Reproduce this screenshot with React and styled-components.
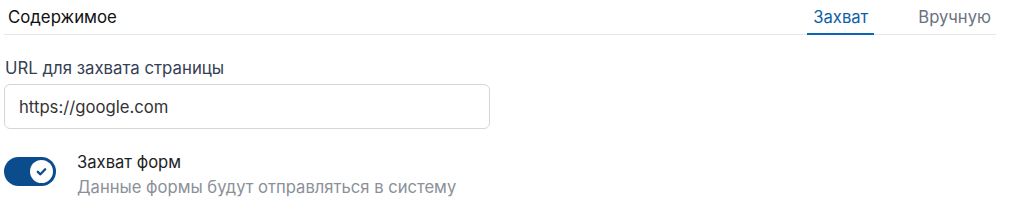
import React from 'react';
import styled, { createGlobalStyle } from 'styled-components';

const GlobalStyle = createGlobalStyle`
	body {
		margin: 0;
		background: #ffffff;
		font-family: Inter, 'Noto Sans', sans-serif;
	}
`;

const CheckIcon = () => (
	<svg width="13" height="13" viewBox="0 0 12 12" fill="none">
		<path d="M2.6 6.3 L5 8.6 L9.4 3.9" stroke="#0b4d8c" strokeWidth="2.1" strokeLinecap="round" strokeLinejoin="round" />
	</svg>
);

const App = () => (
	<>
		<GlobalStyle />
		<Panel>
			<Header>
				<HeaderTitle>Содержимое</HeaderTitle>
				<Tabs>
					<Tab $active>Захват</Tab>
					<Tab>Вручную</Tab>
				</Tabs>
			</Header>
			<Field>
				<FieldLabel>URL для захвата страницы</FieldLabel>
				<TextInput defaultValue="https://google.com" />
			</Field>
			<ToggleRow>
				<Switch>
					<Knob>
						<CheckIcon />
					</Knob>
				</Switch>
				<ToggleText>
					<ToggleTitle>Захват форм</ToggleTitle>
					<ToggleHint>Данные формы будут отправляться в систему</ToggleHint>
				</ToggleText>
			</ToggleRow>
		</Panel>
	</>
);

const Panel = styled.div`
	width: 992px;
	padding-left: 4px;
`;

const Header = styled.div`
	display: flex;
	align-items: stretch;
	justify-content: space-between;
	height: 34px;
	border-bottom: 1px solid #e4e6ea;
`;

const HeaderTitle = styled.div`
	padding-left: 4px;
	display: flex;
	align-items: center;
	font-size: 16.8px;
	color: #111111;
`;

const Tabs = styled.div`
	display: flex;
	gap: 38px;
	margin-right: -1px;
`;

const Tab = styled.div`
	display: flex;
	align-items: center;
	padding: 1px 6px 0;
	font-size: 16.6px;
	color: ${(p) => (p.$active ? '#0b5ea8' : '#6b7280')};
	border-bottom: 2px solid ${(p) => (p.$active ? '#0b64b4' : 'transparent')};
	margin-bottom: -1px;
`;

const Field = styled.div`
	display: flex;
	flex-direction: column;
	padding-top: 22px;
	gap: 5px;
`;

const FieldLabel = styled.label`
	font-size: 16.8px;
	line-height: 22px;
	color: #344054;
	padding-left: 1px;
`;

const TextInput = styled.input`
	box-sizing: border-box;
	width: 486px;
	height: 45px;
	border: 1px solid #d3d6dd;
	border-radius: 6px;
	padding: 0 14px;
	font-family: Inter, 'Noto Sans', sans-serif;
	font-size: 16.7px;
	color: #333333;
	outline: none;
`;

const ToggleRow = styled.div`
	display: flex;
	gap: 21px;
	padding-top: 22px;
`;

const Switch = styled.div`
	box-sizing: border-box;
	margin-top: 6px;
	width: 52px;
	height: 29px;
	border-radius: 15px;
	background: #0b4d8c;
	display: flex;
	align-items: center;
	justify-content: flex-end;
	padding-right: 3px;
`;

const Knob = styled.div`
	width: 23px;
	height: 23px;
	border-radius: 50%;
	background: #ffffff;
	display: flex;
	align-items: center;
	justify-content: center;
`;

const ToggleText = styled.div`
	display: flex;
	flex-direction: column;
	gap: 3px;
`;

const ToggleTitle = styled.div`
	font-size: 16.6px;
	line-height: 22px;
	color: #1d1d1f;
`;

const ToggleHint = styled.div`
	font-size: 16.6px;
	line-height: 22px;
	color: #8b9099;
`;

export default App;
